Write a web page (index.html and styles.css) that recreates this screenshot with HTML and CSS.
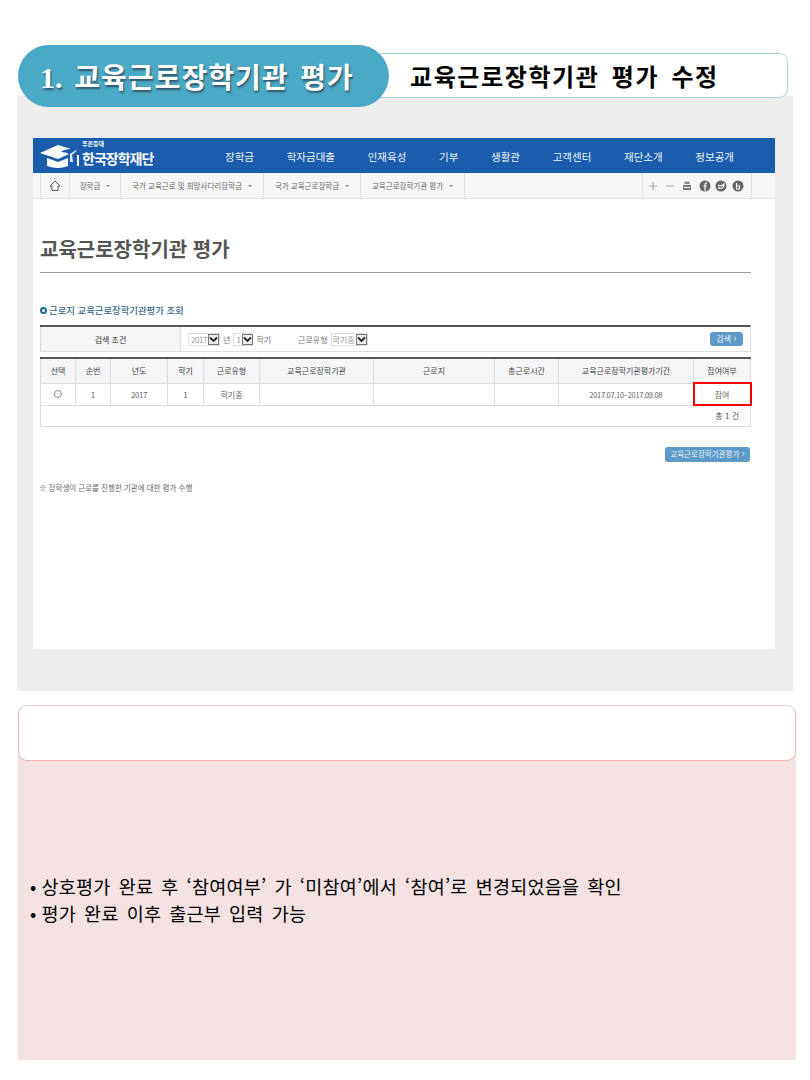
FILE: index.html
```html
<!DOCTYPE html>
<html lang="ko">
<head>
  <meta charset="UTF-8">
  <meta name="viewport" content="width=device-width, initial-scale=1.0">
  <title>교육근로장학기관 평가</title>
  <link rel="stylesheet" href="styles.css">
</head>
<body>
  <header class="head">
    <h1 class="pill"><span class="pill-num">1.</span> 교육근로장학기관 평가</h1>
    <div class="subtitle">교육근로장학기관 평가 수정</div>
  </header>

  <section class="panel">
    <div class="shot">
      <div class="topnav">
        <div class="logo">
          <svg class="logo-cap" width="40" height="26" viewBox="0 0 40 26">
            <path d="M0 10 L18 2 L31 6 Q24 6 21 9 Q26 9 29 11 L18 16 Z" fill="#fff"/>
            <path d="M7 15 L18 19 L28 15 L28 23 Q18 27 7 23 Z" fill="#fff"/>
            <path d="M30 11 L36 7 L36.5 8 L32 12 L33 19 L30 19 Z" fill="#dbe8f5"/>
            <path d="M37 12 H39 V23 H37 Z" fill="#fff"/>
          </svg>
          <div class="logo-text">
            <span class="logo-small">푸른등대</span>
            <span class="logo-name">한국장학재단</span>
          </div>
        </div>
        <nav class="menu">
          <span>장학금</span>
          <span>학자금대출</span>
          <span>인재육성</span>
          <span>기부</span>
          <span>생활관</span>
          <span>고객센터</span>
          <span>재단소개</span>
          <span>정보공개</span>
        </nav>
      </div>

      <div class="crumbs">
        <div class="crumb crumb-home">
          <svg width="12" height="12" viewBox="0 0 12 12">
            <path d="M1 6 L6 1 L11 6 L9 6 V10.5 H3 V6 Z" fill="none" stroke="#555" stroke-width="1"/>
          </svg>
        </div>
        <div class="crumb crumb-1">장학금 <i class="caret"></i></div>
        <div class="crumb crumb-2">국가 교육근로 및 희망사다리장학금 <i class="caret"></i></div>
        <div class="crumb crumb-3">국가 교육근로장학금 <i class="caret"></i></div>
        <div class="crumb crumb-4">교육근로장학기관 평가 <i class="caret"></i></div>
        <div class="crumb-fill"></div>
        <div class="crumb crumb-tools">
          <svg width="100" height="14" viewBox="0 0 100 14">
            <path d="M1 7 H9 M5 3 V11 M18 7 H26" stroke="#aaa" stroke-width="1.2" fill="none"/>
            <path d="M35 6 H43 V11 H35 Z" fill="#777"/>
            <path d="M36.5 2.5 H41.5 V5 H36.5 Z" fill="#888"/>
            <path d="M36 8.5 H42" stroke="#f7f7f7" stroke-width="1"/>
            <circle cx="57" cy="7" r="5.5" fill="#666"/>
            <path d="M57 12 V6 Q57 3.8 59 3.8 M55.5 7 H58.8" stroke="#f7f7f7" stroke-width="1.2" fill="none"/>
            <circle cx="73" cy="7" r="5.5" fill="#666"/>
            <path d="M70 6 Q73 8 76 5 Q76 9 72.5 9.5 Q71 9.5 70 8.5" stroke="#f7f7f7" stroke-width="1.2" fill="none"/>
            <circle cx="90" cy="7" r="5.5" fill="#666"/>
            <path d="M88.5 4 V10 H91.5 V7 H88.5" stroke="#f7f7f7" stroke-width="1.1" fill="none"/>
          </svg>
        </div>
      </div>

      <div class="content">
        <h2 class="page-title">교육근로장학기관 평가</h2>
        <h3 class="section-title"><i class="ring"></i>근로지 교육근로장학기관평가 조회</h3>

        <div class="search">
          <div class="search-label">검색 조건</div>
          <div class="search-fields">
            <span class="sel sel-year">2017<i class="sel-arrow"><svg width="9" height="7" viewBox="0 0 9 7"><path d="M1 1.5 L4.5 5 L8 1.5" fill="none" stroke="#222" stroke-width="1.8"/></svg></i></span>
            <span>년</span>
            <span class="sel sel-term">1<i class="sel-arrow"><svg width="9" height="7" viewBox="0 0 9 7"><path d="M1 1.5 L4.5 5 L8 1.5" fill="none" stroke="#222" stroke-width="1.8"/></svg></i></span>
            <span>학기</span>
            <span class="field-type">근로유형</span>
            <span class="sel">학기중<i class="sel-arrow"><svg width="9" height="7" viewBox="0 0 9 7"><path d="M1 1.5 L4.5 5 L8 1.5" fill="none" stroke="#222" stroke-width="1.8"/></svg></i></span>
            <span class="btn btn-search">검색 <b>&rsaquo;</b></span>
          </div>
        </div>

        <table class="grid">
          <colgroup>
            <col class="c1"><col class="c2"><col class="c3"><col class="c4"><col class="c5">
            <col class="c6"><col class="c7"><col class="c8"><col class="c9"><col class="c10">
          </colgroup>
          <thead>
            <tr>
              <th>선택</th><th>순번</th><th>년도</th><th>학기</th><th>근로유형</th>
              <th>교육근로장학기관</th><th>근로지</th><th>총근로시간</th><th>교육근로장학기관평가기간</th><th>참여여부</th>
            </tr>
          </thead>
          <tbody>
            <tr>
              <td><i class="radio"></i></td><td>1</td><td class="tight">2017</td><td>1</td><td>학기중</td>
              <td></td><td></td><td></td><td class="period">2017.07.10~2017.09.08</td><td class="hit">참여</td>
            </tr>
            <tr class="total">
              <td colspan="10">총 1 건</td>
            </tr>
          </tbody>
        </table>

        <div class="actions"><span class="btn btn-wide">교육근로장학기관평가 <b>&rsaquo;</b></span></div>
        <p class="note">※ 장학생이 근로를 진행한 기관에 대한 평가 수행</p>
      </div>
    </div>
  </section>

  <section class="memo">
    <div class="memo-head"></div>
    <ul class="memo-list">
      <li>상호평가 완료 후 ‘참여여부’ 가 ‘미참여’에서 ‘참여’로 변경되었음을 확인</li>
      <li>평가 완료 이후 출근부 입력 가능</li>
    </ul>
  </section>
</body>
</html>
```

FILE: styles.css
```css
* {
  box-sizing: border-box;
}
body {
  margin: 0;
  background: #fff;
  font-family: "Noto Sans CJK KR", "Noto Sans", sans-serif;
  color: #000;
}

/* header */
.head {
  position: relative;
  z-index: 1;
  display: flex;
  align-items: flex-start;
  margin: 45px 22px 0 18px;
  height: 62px;
}
.pill {
  position: relative;
  z-index: 1;
  flex: none;
  width: 371px;
  height: 62px;
  margin: 0;
  padding-left: 22px;
  border-radius: 31px;
  background: #4aa9c5;
  color: #fff;
  font-size: 28px;
  font-weight: 700;
  line-height: 62px;
  letter-spacing: 1px;
  word-spacing: 3px;
  white-space: nowrap;
  text-shadow: 1px 2px 2px #33566a;
}
.pill-num {
  font-family: "Liberation Serif", serif;
  font-weight: 700;
  font-size: 30px;
  letter-spacing: 0;
}
.subtitle {
  flex: 1;
  height: 45px;
  margin: 8px 0 0 -9px;
  padding-left: 30px;
  background: #fff;
  border: 1px solid #a5d3e0;
  border-left: 0;
  border-radius: 0 9px 9px 0;
  font-size: 24px;
  font-weight: 700;
  line-height: 43px;
  letter-spacing: 1.6px;
  word-spacing: 4px;
  white-space: nowrap;
}

/* gray panel */
.panel {
  width: 776px;
  height: 595px;
  margin: -11px 0 0 17px;
  padding: 42px 18px 0 16px;
  background: #ededed;
}
.shot {
  height: 511px;
  background: #fff;
}

.topnav {
  display: flex;
  height: 35px;
  background: #1a5dac;
  color: #f0f4fa;
}
.logo {
  display: flex;
  align-items: center;
  width: 192px;
  padding-left: 7px;
}
.logo-text {
  display: flex;
  flex-direction: column;
  align-self: flex-start;
  margin: 1px 0 0 2px;
}
.logo-small {
  margin-bottom: 3px;
  font-size: 6px;
  font-weight: 700;
  line-height: 9px;
  color: #fff;
}
.logo-name {
  font-size: 14px;
  font-weight: 700;
  line-height: 15px;
  color: #fff;
  letter-spacing: -1px;
}
.menu {
  display: flex;
  align-items: center;
  gap: 32.7px;
  font-size: 10.5px;
  padding-top: 2px;
}

.crumbs {
  display: flex;
  height: 26px;
  background: #f7f7f7;
  border-bottom: 1px solid #ddd;
  font-size: 7.5px;
  color: #666;
}
.crumb {
  display: flex;
  align-items: center;
  justify-content: center;
  gap: 6px;
  border-right: 1px solid #e2e2e2;
  white-space: nowrap;
}
.crumb-home {
  width: 30px;
  margin-left: 7px;
  border-left: 1px solid #e2e2e2;
}
.crumb-1 { width: 51px; }
.crumb-2 { width: 143px; }
.crumb-3 { width: 97px; }
.crumb-4 { width: 104px; }
.crumb-fill { width: 178px; border-right: 1px solid #e2e2e2; }
.crumb-tools { width: 109px; justify-content: flex-start; padding-left: 5px; }
.caret {
  width: 0;
  height: 0;
  border: 2px solid transparent;
  border-top: 2px solid #888;
  margin-top: 2px;
}

/* page body */
.content {
  padding: 0 24px 0 7px;
}
.page-title {
  height: 74px;
  margin: 0;
  padding-top: 34px;
  border-bottom: 1px solid #999;
  font-size: 20px;
  font-weight: 700;
  line-height: 32px;
  color: #555;
}
.section-title {
  display: flex;
  align-items: center;
  gap: 2px;
  height: 16px;
  margin: 29px 0 7px;
  font-size: 9.4px;
  font-weight: 500;
  line-height: 16px;
  color: #3b6a85;
}
.ring {
  width: 7px;
  height: 7px;
  border: 2px solid #1f6a96;
  border-radius: 50%;
}

.search {
  display: flex;
  height: 27px;
  border-top: 2px solid #555;
  border-bottom: 1px solid #ddd;
  border-right: 1px solid #ddd;
  font-size: 8px;
  color: #777;
}
.search-label {
  width: 141px;
  background: #f6f6f8;
  border-left: 1px solid #ddd;
  border-right: 1px solid #ddd;
  color: #333;
  line-height: 26px;
  text-align: center;
}
.search-fields {
  flex: 1;
  display: flex;
  align-items: center;
  gap: 3px;
  padding: 0 7px 0 7px;
}
.sel {
  display: inline-flex;
  align-items: center;
  justify-content: space-between;
  gap: 1px;
  height: 13px;
  padding-left: 1px;
  border: 1px solid #ddd;
  color: #999;
  line-height: 11px;
}
.sel-year {
  width: 32px;
  padding-left: 2px;
  gap: 0;
  letter-spacing: -0.4px;
}
.sel-term {
  width: 20px;
  padding-left: 2px;
}
.sel-arrow {
  display: flex;
  align-items: center;
  justify-content: center;
  width: 11px;
  height: 11px;
  background: #eee;
  border: 1px solid #777;
}
.field-type {
  margin-left: 24px;
}
.btn {
  display: inline-block;
  border-radius: 3px;
  background: #5d9ac7;
  color: #e8f1f8;
  font-size: 8px;
  text-align: center;
}
.btn b {
  font-weight: 400;
  font-size: 11px;
  line-height: 10px;
}
.btn-search {
  width: 33px;
  height: 14px;
  line-height: 13px;
  margin-left: auto;
}

.grid {
  width: 710px;
  margin-top: 5px;
  border-collapse: collapse;
  table-layout: fixed;
  font-size: 8px;
  color: #666;
  text-align: center;
}
.c1 { width: 35px; }
.c2 { width: 35px; }
.c3 { width: 57px; }
.c4 { width: 36px; }
.c5 { width: 56px; }
.c6 { width: 114px; }
.c7 { width: 121px; }
.c8 { width: 64px; }
.c9 { width: 135px; }
.c10 { width: 57px; }
.grid th {
  height: 25px;
  padding: 0;
  background: #f6f6f8;
  border: 1px solid #ddd;
  border-top: 2px solid #555;
  color: #444;
  font-weight: 400;
}
.grid td {
  height: 22px;
  padding: 0;
  border: 1px solid #ddd;
}
.grid .period {
  font-size: 7.5px;
  letter-spacing: -0.3px;
}
.grid .tight {
  letter-spacing: -0.5px;
}
.grid .hit {
  border: 2px solid #f00;
}
.grid .total td {
  height: 21px;
  padding-right: 11px;
  text-align: right;
  color: #555;
}
.radio {
  display: block;
  width: 8px;
  height: 8px;
  margin: 0 auto;
  border: 1px solid #888;
  border-radius: 50%;
}

.actions {
  display: flex;
  justify-content: flex-end;
  margin: 20px 1px 0 0;
}
.btn-wide {
  width: 85px;
  height: 15px;
  line-height: 14px;
  font-size: 7.5px;
}
.note {
  margin: 19px 0 0 -1px;
  font-size: 7.5px;
  line-height: 14px;
  color: #666;
}

/* memo box */
.memo {
  width: 778px;
  height: 355px;
  margin: 14px 0 0 18px;
  background: #f4e1e1;
  border-radius: 9px 9px 0 0;
}
.memo-head {
  height: 56px;
  background: #fff;
  border: 1px solid #eeb4b0;
  border-top-color: #f0d0ce;
  border-radius: 9px;
}
.memo-list {
  margin: 0;
  padding: 112px 0 0 12px;
  list-style: none;
  font-size: 18.5px;
  line-height: 27px;
  letter-spacing: 0.25px;
  word-spacing: 2.6px;
}
.memo-list li::before {
  content: "•";
  margin-right: 5px;
}
```
